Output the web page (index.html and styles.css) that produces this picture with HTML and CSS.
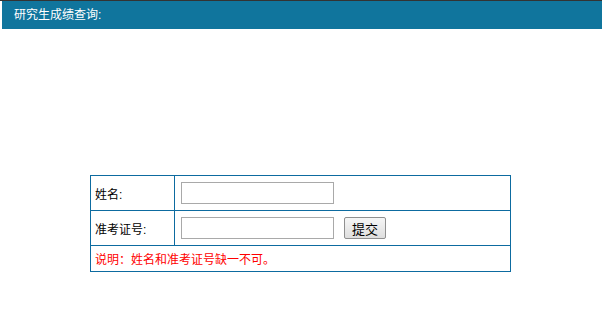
FILE: index.html
```html
<!DOCTYPE html>
<html lang="zh-CN">

<head>
    <meta charset="UTF-8">
    <title>研究生成绩查询</title>
    <link rel="stylesheet" href="styles.css">
</head>

<body>
    <div class="top-line">
        <div class="title-bar">研究生成绩查询:</div>
    </div>

    <form class="query-form">
        <table class="query-table">
            <tr>
                <td class="label">姓名:</td>
                <td class="field"><input type="text" class="text-input"></td>
            </tr>
            <tr>
                <td class="label">准考证号:</td>
                <td class="field"><input type="text" class="text-input"><button type="button" class="submit-btn">提交</button></td>
            </tr>
            <tr>
                <td colspan="2" class="note">说明：姓名和准考证号缺一不可。</td>
            </tr>
        </table>
    </form>
</body>

</html>
```
FILE: styles.css
```css
body {
    margin: 0;
    background-color: #ffffff;
    font-family: "Liberation Sans", "Noto Sans CJK SC", sans-serif;
    font-size: 12px;
    color: #000000;
}

.top-line {
    border-top: 1px solid #333333;
}

.title-bar {
    margin-left: 2px;
    height: 28px;
    line-height: 28px;
    padding-left: 12px;
    background-color: #10759d;
    color: #ffffff;
    font-size: 12px;
}

.query-form {
    margin: 146px 0 0 0;
}

.query-table {
    width: 421px;
    margin: 0 0 0 90px;
    border-collapse: collapse;
}

.query-table td {
    border: 1px solid #0d6ba0;
    padding: 0 0 0 4px;
    height: 34px;
    vertical-align: middle;
}

.query-table td.label {
    width: 79px;
}

.query-table td.field {
    padding-left: 6px;
}

.query-table td.note {
    height: 25px;
    color: #ff0000;
}

.text-input {
    box-sizing: border-box;
    width: 153px;
    height: 22px;
    margin: 0;
    padding: 1px 3px;
    border: 1px solid #a9a9a9;
    vertical-align: middle;
    font-size: 12px;
}

.submit-btn {
    box-sizing: border-box;
    width: 42px;
    height: 22px;
    margin: 0 0 0 10px;
    padding: 0;
    border: 1px solid #8f8f8f;
    border-radius: 2px;
    background: linear-gradient(#f6f6f6, #dedede);
    font-family: "Liberation Sans", "Noto Sans CJK SC", sans-serif;
    font-size: 13px;
    color: #000000;
    vertical-align: middle;
}
```
